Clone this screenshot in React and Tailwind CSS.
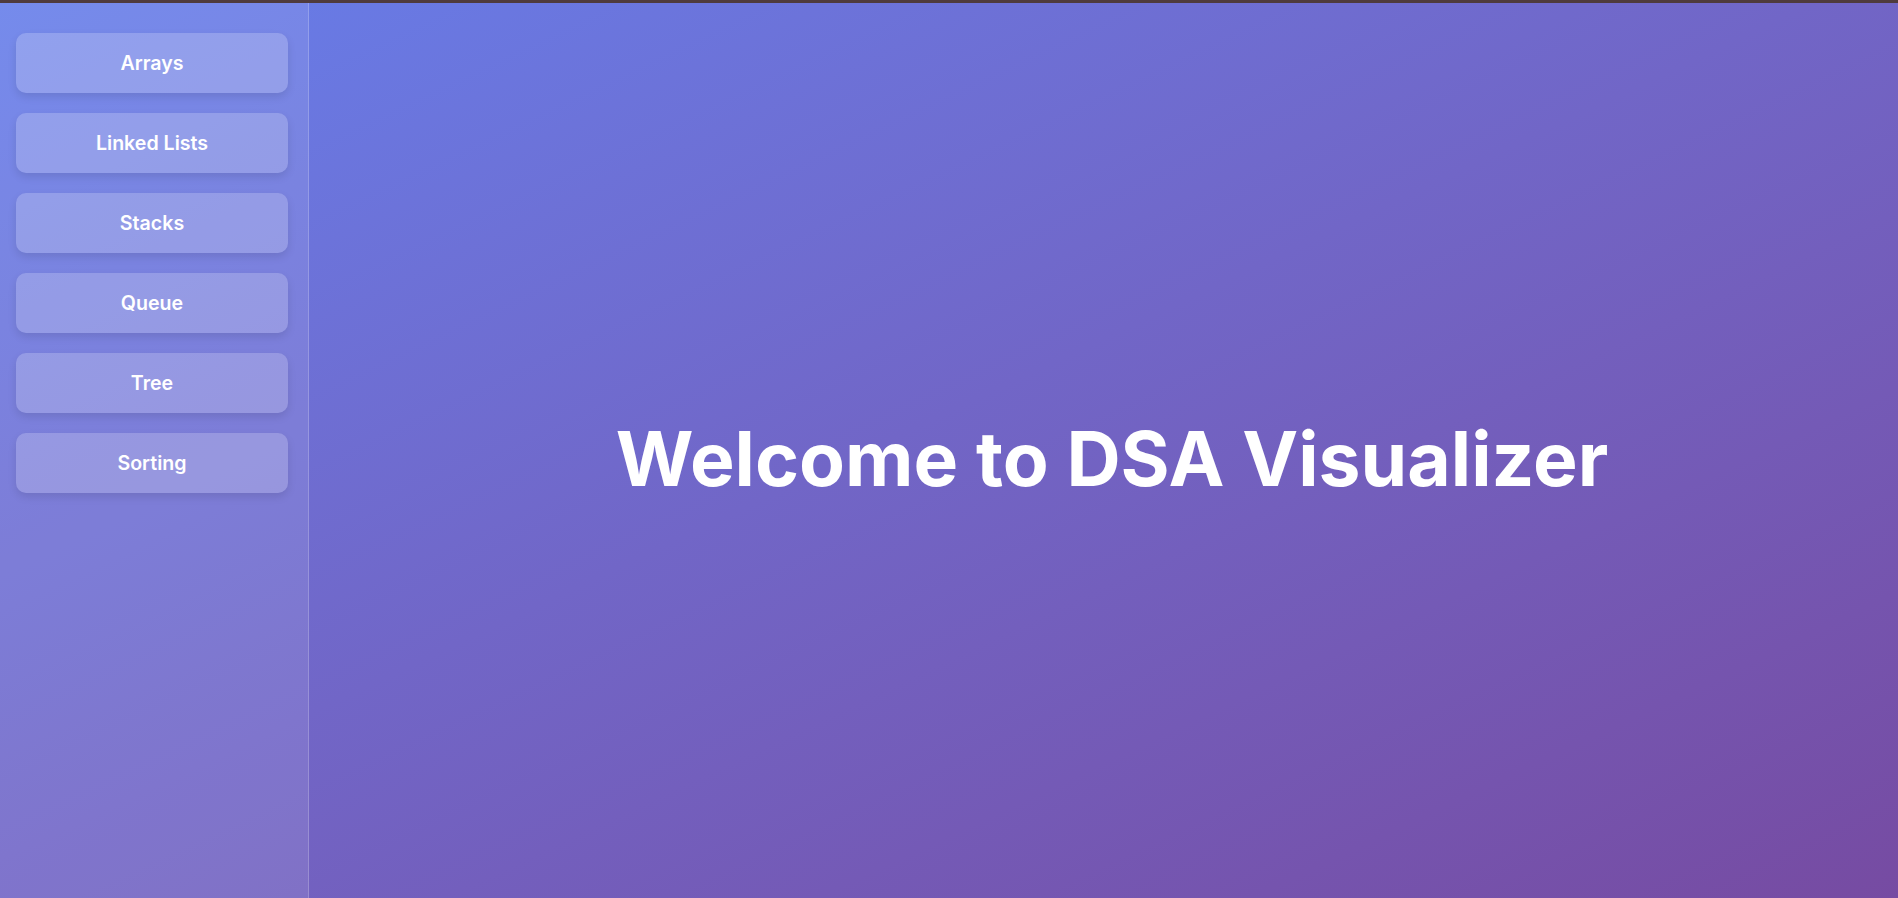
import React from "react";

const topics = ["Arrays", "Linked Lists", "Stacks", "Queue", "Tree", "Sorting"];

export default function App() {
  return (
    <div
      className="h-[898px] w-full flex flex-col overflow-hidden"
      style={{ fontFamily: "Inter, 'Noto Sans', sans-serif" }}
    >
      {/* thin top strip */}
      <div className="h-[3px] bg-[#4f3b3d] flex-shrink-0" />

      <div className="flex-1 flex bg-gradient-to-br from-[#667eea] to-[#764ba2]">
        {/* Sidebar */}
        <aside className="w-[309px] flex-shrink-0 bg-white/10 border-r border-white/20 pt-[30px] pl-4">
          <nav className="flex flex-col gap-5">
            {topics.map((t) => (
              <button
                key={t}
                className="w-[272px] h-[60px] pt-[2px] rounded-[10px] bg-white/20 text-white font-semibold text-[19.6px] shadow-[0_4px_8px_rgba(0,0,0,0.1)]"
              >
                {t}
              </button>
            ))}
          </nav>
        </aside>

        {/* Main */}
        <main className="flex-1 flex items-center justify-center pl-[17px]">
          <h1 className="text-white font-bold text-[75px] leading-none mt-[16px]">
            Welcome to DSA Visualizer
          </h1>
        </main>
      </div>
    </div>
  );
}
